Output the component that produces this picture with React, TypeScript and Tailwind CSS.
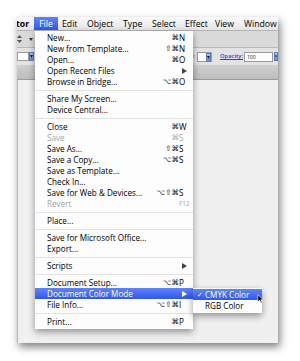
import React from "react";

type Item =
  | { sep: true }
  | {
      sep?: false;
      label: string;
      mods?: string;
      key?: string;
      arrow?: boolean;
      disabled?: boolean;
      fkey?: string;
      active?: boolean;
    };

const items: Item[] = [
  { label: "New...", mods: "⌘", key: "N" },
  { label: "New from Template...", mods: "⇧⌘", key: "N" },
  { label: "Open...", mods: "⌘", key: "O" },
  { label: "Open Recent Files", arrow: true },
  { label: "Browse in Bridge...", mods: "⌥⌘", key: "O" },
  { sep: true },
  { label: "Share My Screen..." },
  { label: "Device Central..." },
  { sep: true },
  { label: "Close", mods: "⌘", key: "W" },
  { label: "Save", mods: "⌘", key: "S", disabled: true },
  { label: "Save As...", mods: "⇧⌘", key: "S" },
  { label: "Save a Copy...", mods: "⌥⌘", key: "S" },
  { label: "Save as Template..." },
  { label: "Check In..." },
  { label: "Save for Web & Devices...", mods: "⌥⇧⌘", key: "S" },
  { label: "Revert", fkey: "F12", disabled: true },
  { sep: true },
  { label: "Place..." },
  { sep: true },
  { label: "Save for Microsoft Office..." },
  { label: "Export..." },
  { sep: true },
  { label: "Scripts", arrow: true },
  { sep: true },
  { label: "Document Setup...", mods: "⌥⌘", key: "P" },
  { label: "Document Color Mode", arrow: true, active: true },
  { label: "File Info...", mods: "⌥⇧⌘", key: "I" },
  { sep: true },
  { label: "Print...", mods: "⌘", key: "P" },
];

const Arrow = ({ color }: { color: string }) => (
  <svg width="5" height="6" viewBox="0 0 5 6" className="ml-[3px]">
    <path d="M0 0 L5 3 L0 6 Z" fill={color} />
  </svg>
);

const BlueBtn = ({ w = 5 }: { w?: number }) => (
  <div
    className="h-[9px] bg-gradient-to-b from-[#a9c6f2] to-[#5d8fe0] border border-[#5b7fb8] flex items-center justify-center"
    style={{ width: w }}
  >
    <svg width="3" height="3" viewBox="0 0 4 4">
      <path d="M0 0 L4 0 L2 4 Z" fill="#1a1a3a" />
    </svg>
  </div>
);

export default function App() {
  return (
    <div className="w-[300px] h-[361px] bg-white relative overflow-hidden font-['Open_Sans','DejaVu_Sans',sans-serif] text-[#111]">
      {/* window screenshot */}
      <div className="ml-[17px] mt-[17px] w-[261px] h-[326px] flex flex-col bg-[#efefef] shadow-[2px_4px_8px_rgba(0,0,0,0.5)] overflow-hidden">
        {/* menubar */}
        <div className="h-[14px] flex items-stretch bg-gradient-to-b from-[#fbfbfb] to-[#e4e4e4] border-b border-[#b4b4b4] text-[8.7px] leading-[14px] font-medium text-black">
          <div className="w-[18px] overflow-hidden font-bold -ml-[1px] pl-0">tor</div>
          <div className="w-[24px] bg-gradient-to-b from-[#6283f7] to-[#3056ee] text-white text-center">File</div>
          <div className="w-[25px] pl-[4px]">Edit</div>
          <div className="w-[36px] pl-[4px]">Object</div>
          <div className="w-[29px] pl-[4px]">Type</div>
          <div className="w-[33px] pl-[4px]">Select</div>
          <div className="w-[30px] pl-[4px]">Effect</div>
          <div className="w-[29px] pl-[4px]">View</div>
          <div className="w-[37px] pl-[4px]">Window</div>
        </div>
        {/* toolbar row */}
        <div className="h-[16px] bg-[#dadada] flex items-center gap-[4px]">
          <svg width="5" height="8" viewBox="0 0 5 8">
            <path d="M2.5 0 L5 3 L0 3 Z" fill="#555" />
            <path d="M0 5 L5 5 L2.5 8 Z" fill="#555" />
          </svg>
          <svg width="4" height="3" viewBox="0 0 4 3" className="ml-[3px]">
            <path d="M0 0 L4 0 L2 3 Z" fill="#333" />
          </svg>
        </div>
        {/* control row */}
        <div className="h-[18px] bg-[#e3e3e3] border-t border-[#b9b9b9] flex items-center">
          <div className="w-[12px] h-[9px] bg-white border border-[#9a9a9a]" />
          <BlueBtn />
          <div className="flex-1" />
          <span className="text-[5.5px] text-[#333] whitespace-nowrap mr-[2px]">le:</span>
          <div className="w-[15px] h-[10px] bg-white border border-[#9a9a9a] flex justify-end">
            <BlueBtn />
          </div>
          <span className="ml-[8px] text-[5.8px] text-[#2b3fd6] underline font-semibold">Opacity:</span>
          <div className="ml-[1px] w-[29px] h-[10px] bg-white border border-[#9a9a9a] text-[5px] leading-[8px] pl-[2px]">100</div>
          <div className="ml-[1px] shrink-0">
            <BlueBtn w={4} />
          </div>
        </div>
        {/* band */}
        <div className="h-[15px] bg-gradient-to-b from-[#cfcfcf] to-[#bdbdbd] border-b border-[#9c9c9c]" />
        {/* canvas */}
        <div className="flex-1 bg-[#f0f0f0] border-l border-[#b8b8b8]" />
      </div>

      {/* File menu */}
      <div className="absolute left-[35px] top-[31px] w-[158px] bg-[#fdfdfd] shadow-[0_3px_7px_rgba(0,0,0,0.4)] pt-[1px] pb-[2px] text-[8.15px] font-medium">
        {items.map((it, i) => {
          if (it.sep) {
            return (
              <div key={i} className="h-[6px] flex items-center">
                <div className="w-full h-[1px] bg-[#e2e2e2]" />
              </div>
            );
          }
          const color = it.active ? "text-white" : it.disabled ? "text-[#a6a6a6]" : "text-black";
          return (
            <div
              key={i}
              className={`h-[11px] flex items-center pl-[12px] pr-[4px] leading-[11px] ${color} ${
                it.active ? "bg-gradient-to-b from-[#6283f7] to-[#3056ee]" : ""
              }`}
            >
              <span className="flex-1 whitespace-nowrap">{it.label}</span>
              <span className="text-right whitespace-nowrap text-[7.5px]">{it.mods}</span>
              <span className="w-[10px] whitespace-nowrap flex items-center">
                {it.key}
                {it.fkey && <span className="text-[6.5px] font-normal">{it.fkey}</span>}
                {it.arrow && <Arrow color={it.active ? "#fff" : "#444"} />}
              </span>
            </div>
          );
        })}
      </div>

      {/* submenu */}
      <div className="absolute left-[193px] top-[288px] w-[69px] bg-[#fdfdfd] shadow-[0_3px_7px_rgba(0,0,0,0.4)] pt-[1px] pb-[2px] text-[8.15px] font-medium">
        <div className="h-[11px] flex items-center bg-gradient-to-b from-[#6283f7] to-[#3056ee] text-white leading-[11px]">
          <span className="w-[12px] pl-[4px] text-[7px]">✓</span>
          <span>CMYK Color</span>
        </div>
        <div className="h-[11px] flex items-center leading-[11px] text-black">
          <span className="w-[12px]" />
          <span>RGB Color</span>
        </div>
      </div>

      {/* cursor */}
      <svg className="absolute left-[257px] top-[294px]" width="7" height="10" viewBox="0 0 10 15">
        <path d="M1 1 L1 12 L3.8 9.4 L5.8 13.6 L7.6 12.8 L5.6 8.6 L9.4 8.6 Z" fill="#000" stroke="#fff" strokeWidth="1" />
      </svg>
    </div>
  );
}
